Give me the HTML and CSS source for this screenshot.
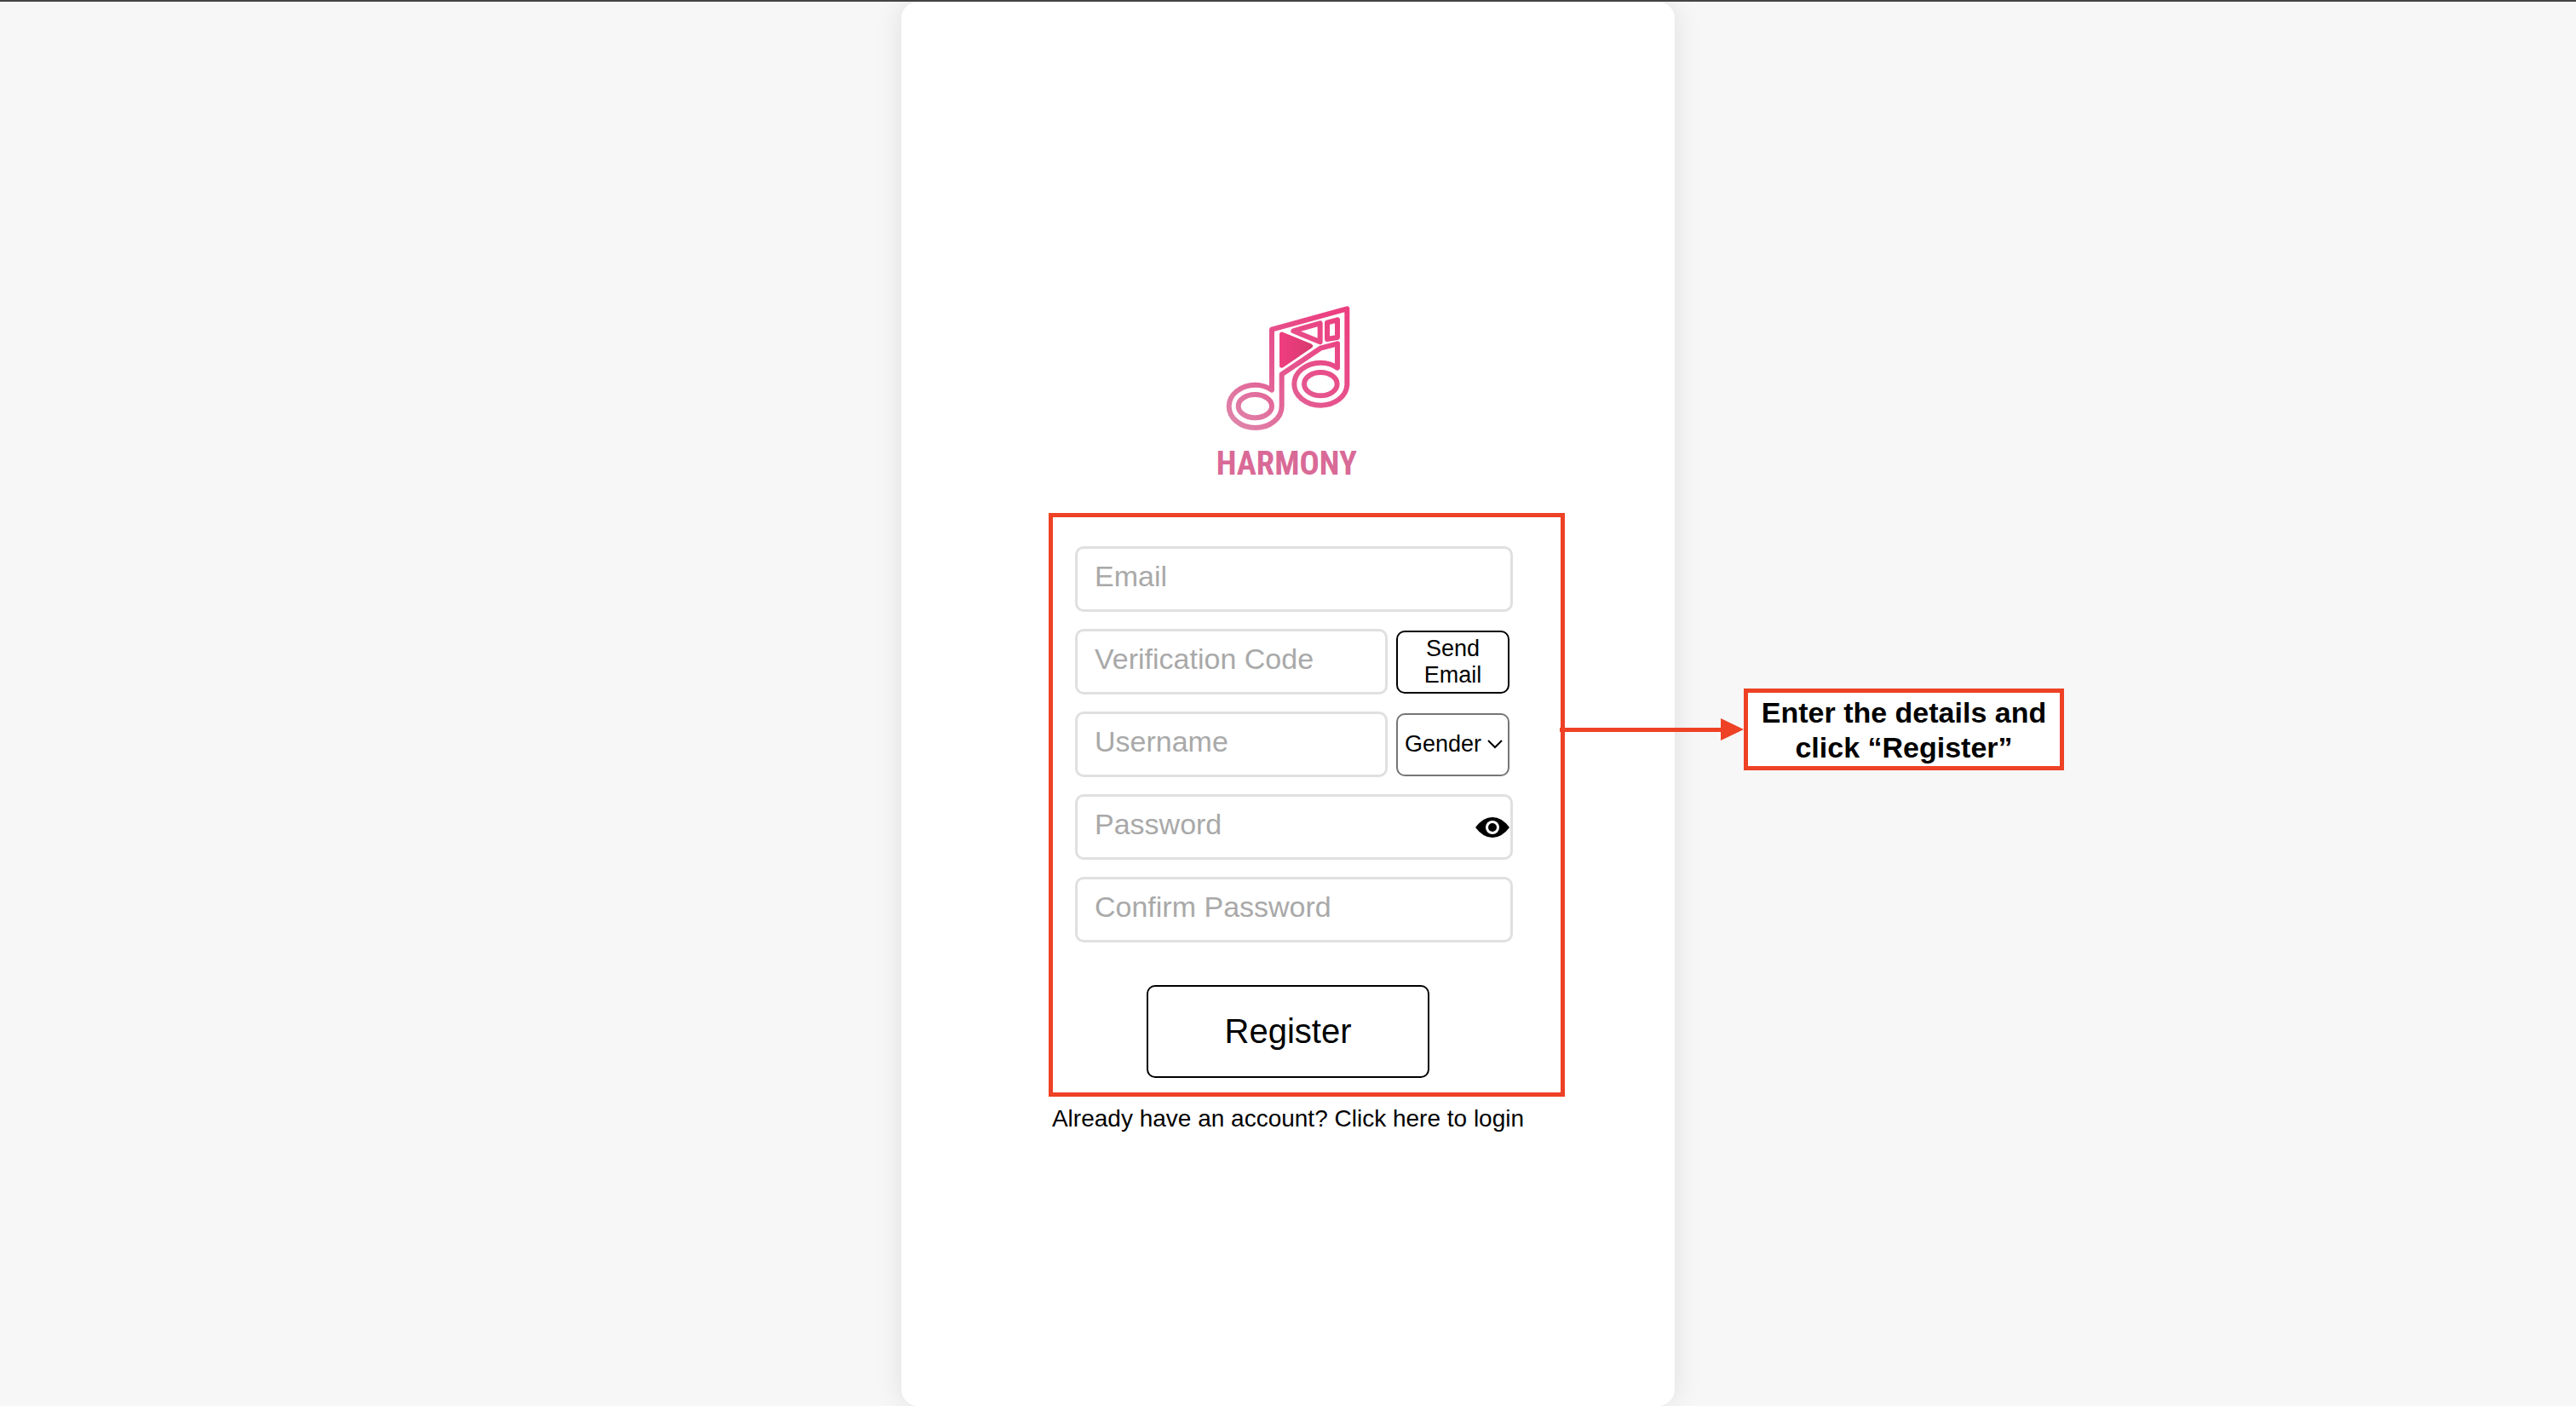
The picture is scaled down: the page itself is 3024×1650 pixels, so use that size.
FILE: index.html
```html
<!DOCTYPE html>
<html lang="en">
<head>
<meta charset="utf-8">
<meta name="viewport" content="width=device-width, initial-scale=1">
<title>Harmony</title>
<link rel="stylesheet" href="styles.css">
</head>
<body>
<main class="card">
  <svg class="logo" viewBox="6 0 600 720" role="img" aria-label="Harmony">
    <defs>
      <linearGradient id="note" gradientUnits="userSpaceOnUse" x1="470" y1="80" x2="110" y2="480">
        <stop offset="0" stop-color="#ec3f80"/>
        <stop offset="0.5" stop-color="#e5568f"/>
        <stop offset="1" stop-color="#de85aa"/>
      </linearGradient>
      <linearGradient id="play" x1="0" y1="0" x2="1" y2="0">
        <stop offset="0" stop-color="#ee3d7e"/>
        <stop offset="1" stop-color="#d93a70"/>
      </linearGradient>
    </defs>
    <g fill="none" stroke="url(#note)" stroke-width="18" stroke-linejoin="round" stroke-linecap="round">
      <path d="M249 353V140L514 67V335A93 75 0 0 1 421 407A93 75 0 0 1 328 332A93 75 0 0 1 421 257Q454 257 480 275V190L420 206L284 298V410A93 76 0 0 1 191 486A93 76 0 0 1 98 410A93 76 0 0 1 191 335Q222 335 249 353Z"/>
      <ellipse cx="190" cy="410" rx="59" ry="41"/>
      <ellipse cx="421" cy="332" rx="58" ry="41"/>
      <path d="M325 145L419 118V184ZM444 116L480 106V168L444 174Z"/>
    </g>
    <path d="M284 157V267L385 198Z" fill="url(#play)" stroke="url(#play)" stroke-width="16" stroke-linejoin="round"/>
    <text class="wordmark" x="301" y="650" text-anchor="middle">HARMONY</text>
  </svg>

  <form class="form">
    <input class="field" type="email" placeholder="Email" aria-label="Email">
    <div class="row">
      <input class="field" type="text" placeholder="Verification Code" aria-label="Verification Code">
      <button class="side send" type="button">Send Email</button>
    </div>
    <div class="row">
      <input class="field" type="text" placeholder="Username" aria-label="Username">
      <div class="side gender">
        <select class="gender-select" aria-label="Gender"><option>Gender</option></select>
        <svg class="chevron" viewBox="0 0 18 11" aria-hidden="true"><path d="M1 1L9 9L17 1"/></svg>
      </div>
    </div>
    <div class="password">
      <input class="field" type="password" placeholder="Password" aria-label="Password">
      <button class="reveal" type="button" aria-label="Show password">
        <svg class="eye" viewBox="0 0 40 24" aria-hidden="true">
          <path d="M0 12Q9 0 20 0T40 12Q31 24 20 24T0 12Z"/>
          <circle cx="20" cy="12" r="8" fill="#fff"/>
          <circle cx="20" cy="12" r="5"/>
        </svg>
      </button>
    </div>
    <input class="field" type="password" placeholder="Confirm Password" aria-label="Confirm Password">
    <button class="register" type="submit">Register</button>

    <div class="outline"></div>
    <svg class="arrow" viewBox="0 0 216 26" aria-hidden="true"><path d="M0 11H189V0L216 13L189 26V16H0Z"/></svg>
    <p class="note">Enter the details and click “Register”</p>
  </form>

  <a class="login" href="#login">Already have an account? Click here to login</a>
</main>
</body>
</html>
```
FILE: styles.css
```css
* {
  box-sizing: border-box;
}

body {
  margin: 0;
  min-height: 100vh;
  display: flex;
  justify-content: center;
  border-top: 2px solid #444;
  background: #f7f7f7;
  color: #000;
  font-family: "Liberation Sans", Arial, sans-serif;
  overflow-x: hidden;
}

.card {
  width: 30%;
  min-width: 620px;
  display: flex;
  flex-direction: column;
  align-items: center;
  justify-content: center;
  border-radius: 20px;
  background: #fff;
  box-shadow: 0 0 32px rgba(0, 0, 0, 0.1);
}

.logo {
  width: 200px;
  height: 240px;
  margin: 17px 0 61px;
}

.wordmark {
  font-family: "Roboto Condensed", "Liberation Sans Narrow", "Liberation Sans", sans-serif;
  font-size: 116px;
  font-weight: 700;
  fill: #d96a97;
}

.form {
  position: relative;
  width: 500px;
  display: flex;
  flex-direction: column;
  gap: 20px;
}

.field {
  width: 514px;
  padding: 13px 20px 19px;
  border: 3px solid #e0e0e0;
  border-radius: 10px;
  background: #fff;
  font-family: inherit;
  font-size: 34px;
  line-height: 39px;
  height: 77px;
  outline: none;
}

.field::placeholder {
  color: #a9a9a9;
  opacity: 1;
}

.row {
  display: flex;
  align-items: center;
  gap: 10px;
}

.row .field {
  width: 367px;
}

.side {
  width: 133px;
  height: 74px;
  flex: none;
  font-family: inherit;
  font-size: 27px;
  line-height: 31px;
}

.send {
  padding: 0 20px;
  border: 2px solid #000;
  border-radius: 10px;
  background: #fff;
  color: #000;
}

.gender {
  display: grid;
  align-items: center;
}

.gender-select,
.chevron {
  grid-area: 1 / 1;
}

.gender-select {
  width: 100%;
  height: 100%;
  padding: 0 8px;
  appearance: none;
  border: 2px solid #767676;
  border-radius: 10px;
  background: #fff;
  color: #000;
  font: inherit;
}

.chevron {
  width: 18px;
  height: 11px;
  margin-right: 8px;
  justify-self: end;
  fill: none;
  stroke: #000;
  stroke-width: 2;
  pointer-events: none;
}

.password {
  position: relative;
  width: 514px;
  display: flex;
}

.reveal {
  position: absolute;
  top: 0;
  right: 4px;
  bottom: 0;
  display: flex;
  align-items: center;
  padding: 0;
  border: 0;
  background: none;
}

.eye {
  width: 40px;
  height: 24px;
}

.register {
  align-self: center;
  width: 332px;
  height: 109px;
  margin-top: 30px;
  border: 2px solid #000;
  border-radius: 10px;
  background: #fff;
  color: #000;
  font-family: inherit;
  font-size: 40px;
}

.login {
  margin-top: 32px;
  color: #000;
  font-size: 28px;
  line-height: 32px;
  text-decoration: none;
}

.outline {
  position: absolute;
  inset: -39px -75px -22px -31px;
  border: 5px solid #ee4125;
  pointer-events: none;
}

.arrow {
  position: absolute;
  top: 202px;
  left: 569px;
  width: 216px;
  height: 26px;
  fill: #ee4125;
}

.note {
  position: absolute;
  top: 167px;
  left: 785px;
  width: 376px;
  margin: 0;
  padding: 3px 10px 1px;
  border: 5px solid #ee4125;
  background: #fff;
  font-size: 34px;
  font-weight: 700;
  line-height: 41px;
  text-align: center;
}
```
